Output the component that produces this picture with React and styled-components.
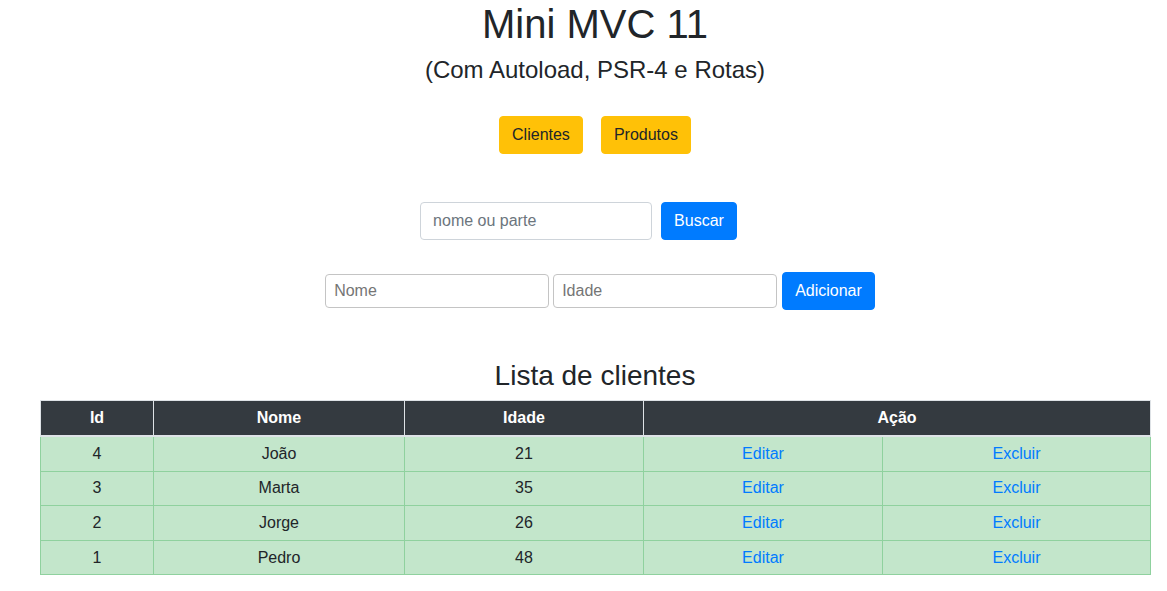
import React from 'react';
import styled, { createGlobalStyle } from 'styled-components';

const GlobalStyle = createGlobalStyle`
  * { box-sizing: border-box; }
  body {
    margin: 0;
    background: #fff;
    color: #212529;
    font-family: "Liberation Sans", Arial, sans-serif;
    font-size: 16px;
    line-height: 1.5;
  }
`;

const Page = styled.div`
  width: 1110px;
  margin-left: 40px;
  display: flex;
  flex-direction: column;
  align-items: stretch;
`;

const Title = styled.h1`
  margin: 0 0 8px;
  font-size: 40px;
  font-weight: 500;
  line-height: 1.2;
  text-align: center;
`;

const Subtitle = styled.h4`
  margin: 0 0 8px;
  font-size: 24px;
  font-weight: 500;
  line-height: 1.2;
  text-align: center;
`;

const Row = styled.div`
  display: flex;
  justify-content: center;
  align-items: center;
  gap: ${(p) => p.gap || 0}px;
  margin-top: ${(p) => p.top || 0}px;
  padding-left: ${(p) => (p.shift > 0 ? p.shift * 2 : 0)}px;
  padding-right: ${(p) => (p.shift < 0 ? -p.shift * 2 : 0)}px;
`;

const Button = styled.button`
  height: 38px;
  padding: 6px 12px;
  border: 1px solid ${(p) => (p.variant === 'warning' ? '#ffc107' : '#007bff')};
  border-radius: 4px;
  background: ${(p) => (p.variant === 'warning' ? '#ffc107' : '#007bff')};
  color: ${(p) => (p.variant === 'warning' ? '#212529' : '#fff')};
  font-family: inherit;
  font-size: 16px;
  line-height: 1.5;
`;

const SearchInput = styled.input`
  width: 232px;
  height: 38px;
  padding: 6px 12px;
  border: 1px solid #ced4da;
  border-radius: 4px;
  font-family: inherit;
  font-size: 16px;
  color: #495057;
  &::placeholder { color: #6c757d; }
`;

const FieldInput = styled.input`
  width: 224px;
  height: 34px;
  padding: 4px 8px;
  border: 1px solid #c4c4c4;
  border-radius: 4px;
  font-family: inherit;
  font-size: 16px;
  &::placeholder { color: #757575; }
`;

const ListTitle = styled.h3`
  margin: 49px 0 8px;
  font-size: 28px;
  font-weight: 500;
  line-height: 1.2;
  text-align: center;
`;

const Table = styled.table`
  width: 1110px;
  border-collapse: collapse;
  table-layout: fixed;
`;

const Th = styled.th`
  padding: 4.8px;
  background: #343a40;
  color: #fff;
  font-weight: 700;
  text-align: center;
  border: 1px solid #dee2e6;
  border-bottom-width: 2px;
`;

const Td = styled.td`
  padding: 4.8px;
  background: #c3e6cb;
  text-align: center;
  border: 1px solid #8fd19e;
`;

const Link = styled.a`
  color: #007bff;
  text-decoration: none;
`;

const clientes = [
  { id: 4, nome: 'João', idade: 21 },
  { id: 3, nome: 'Marta', idade: 35 },
  { id: 2, nome: 'Jorge', idade: 26 },
  { id: 1, nome: 'Pedro', idade: 48 },
];

const App = () => (
  <>
    <GlobalStyle />
    <Page>
      <Title>Mini MVC 11</Title>
      <Subtitle>(Com Autoload, PSR-4 e Rotas)</Subtitle>
      <Row top={23} gap={18}>
        <Button variant="warning">Clientes</Button>
        <Button variant="warning">Produtos</Button>
      </Row>
      <Row top={48} gap={9} shift={-16.5}>
        <SearchInput placeholder="nome ou parte" />
        <Button>Buscar</Button>
      </Row>
      <Row top={32} gap={4} shift={5}>
        <FieldInput placeholder="Nome" />
        <FieldInput placeholder="Idade" />
        <Button style={{ marginLeft: 1 }}>Adicionar</Button>
      </Row>
      <ListTitle>Lista de clientes</ListTitle>
      <Table>
        <colgroup>
          <col style={{ width: 113 }} />
          <col style={{ width: 251 }} />
          <col style={{ width: 239 }} />
          <col style={{ width: 239 }} />
          <col style={{ width: 268 }} />
        </colgroup>
        <thead>
          <tr>
            <Th>Id</Th>
            <Th>Nome</Th>
            <Th>Idade</Th>
            <Th colSpan={2}>Ação</Th>
          </tr>
        </thead>
        <tbody>
          {clientes.map((c) => (
            <tr key={c.id}>
              <Td>{c.id}</Td>
              <Td>{c.nome}</Td>
              <Td>{c.idade}</Td>
              <Td><Link href="#">Editar</Link></Td>
              <Td><Link href="#">Excluir</Link></Td>
            </tr>
          ))}
        </tbody>
      </Table>
    </Page>
  </>
);

export default App;
